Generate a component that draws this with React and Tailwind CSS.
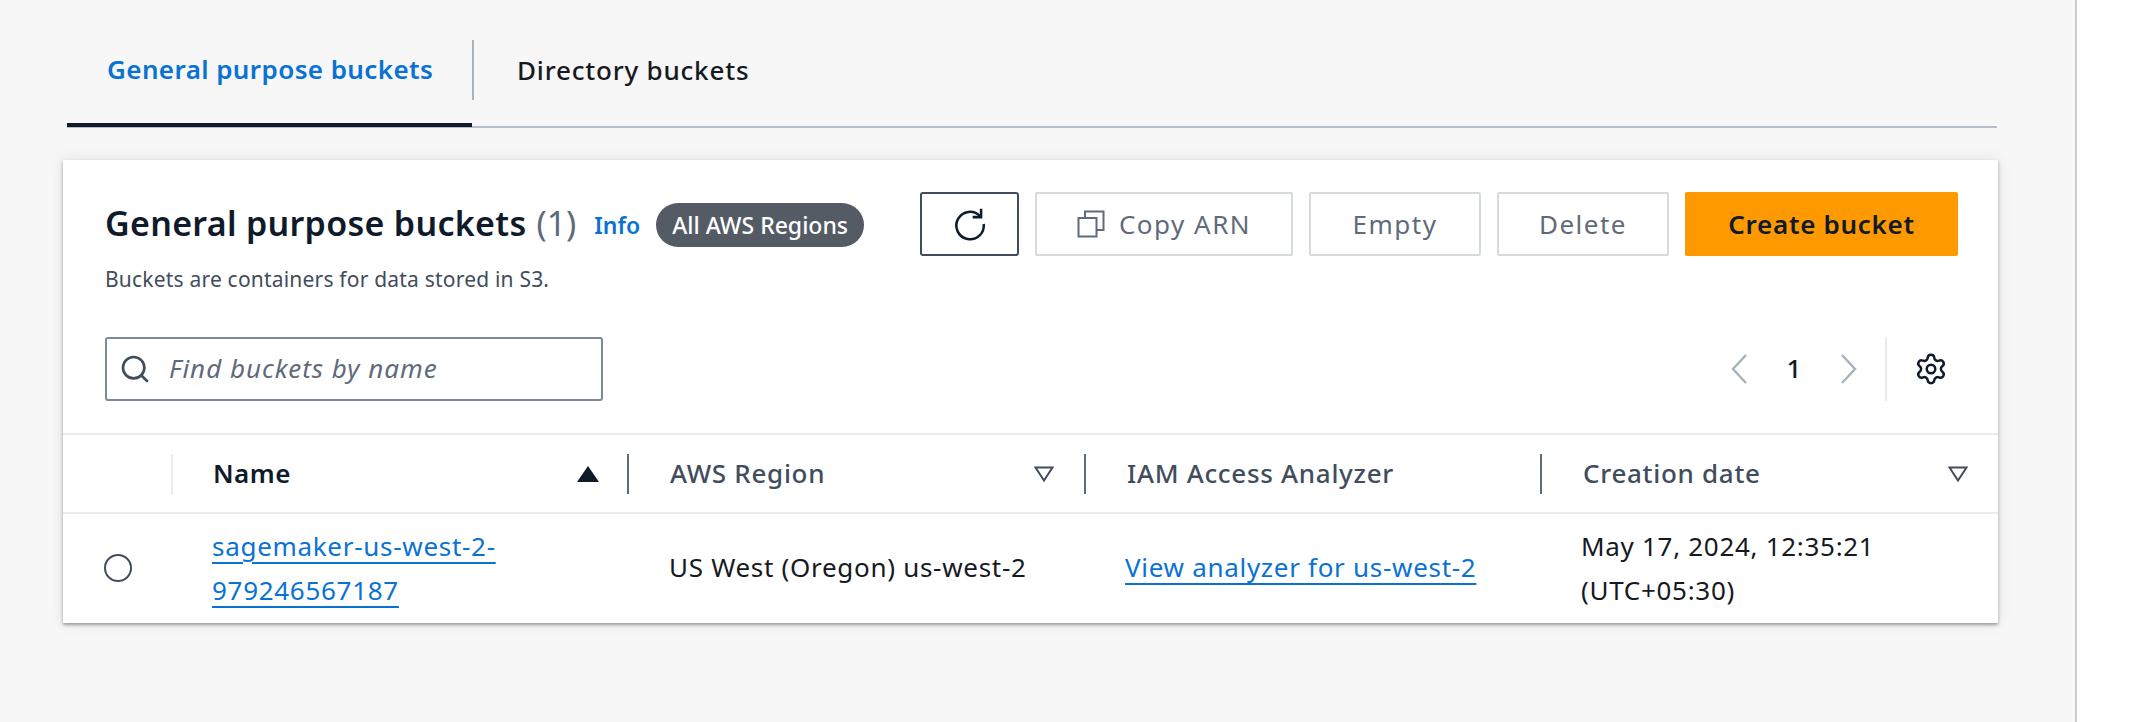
import { Search, Settings } from "lucide-react";

const RefreshIcon = () => (
  <svg width="38" height="38" viewBox="0 0 36 36" fill="none" stroke="#0f1b2a" strokeWidth="2.4">
    <path d="M27.5 10.5A13 13 0 1 0 31 18" />
    <path d="M28.5 3.5v8h-8" />
  </svg>
);

const CopyIcon = () => (
  <svg width="28" height="28" viewBox="0 0 28 28" fill="none" stroke="#5f6b7a" strokeWidth="2">
    <rect x="1.5" y="8" width="18" height="18.5" />
    <path d="M8 8V1.5h18.5V20H19.5" />
  </svg>
);

const FilterCaret = () => (
  <svg width="20" height="16" viewBox="0 0 20 16" fill="none" stroke="#414d5c" strokeWidth="2">
    <path d="M1.5 1.5h17L10 14.5z" />
  </svg>
);

const SortCaret = () => (
  <svg width="22" height="16" viewBox="0 0 22 16" fill="#0f1b2a">
    <path d="M11 0l11 16H0z" />
  </svg>
);

const Chevron = ({ d }) => (
  <svg width="20" height="32" viewBox="0 0 20 32" fill="none" stroke="#a6b3bd" strokeWidth="2.4">
    <path d={d} />
  </svg>
);

const DisabledButton = ({ className, children }) => (
  <button className={`h-[64px] flex items-center justify-center gap-[14px] bg-white border-2 border-[#d5dbdb] rounded-[2px] text-[#5f6b7a] text-[26px] font-normal tracking-[1.5px] ${className}`}>
    {children}
  </button>
);

const HeaderCell = ({ label, caret }) => (
  <div className="h-[40px] flex items-center justify-between border-l-2 border-[#5f6b7a] pl-[41px] pr-[30px]">
    <span className="text-[26px] font-medium tracking-[0.7px] text-[#414d5c]">{label}</span>
    {caret}
  </div>
);

export default function App() {
  return (
    <div className="w-[2146px] h-[722px] flex overflow-hidden bg-white font-['Noto_Sans',sans-serif]">
      <main className="w-[2077px] h-full bg-[#f7f7f7] border-r-2 border-[#c6ccd0]">
        {/* Tabs */}
        <div className="ml-[67px] mr-[78px] mt-[38px] h-[90px] flex border-b-2 border-[#b6bec9]">
          <div className="w-[405px] h-[89px] pt-[4px] pb-[26px] pl-[40px] border-b-[4px] border-[#0f1b2a] flex items-center">
            <span className="text-[26px] font-semibold text-[#0972d3] tracking-[0.4px]">General purpose buckets</span>
          </div>
          <div className="w-[2px] h-[60px] mt-[2px] bg-[#aab4bd]" />
          <div className="h-[64px] pl-[43px] flex items-center">
            <span className="text-[26px] font-medium text-[#16191f] tracking-[0.8px]">Directory buckets</span>
          </div>
        </div>

        {/* Buckets panel */}
        <section className="ml-[63px] mt-[32px] w-[1935px] h-[463px] bg-white shadow-[0_2px_3px_rgba(84,91,100,0.55),0_0_14px_rgba(0,28,36,0.1)]">
          <div className="h-[275px] border-b-2 border-[#e9ebed] pl-[42px] pr-[40px] pt-[32px]">
            <div className="flex justify-between">
              <div>
                <div className="h-[62px] flex items-center">
                  <h2 className="text-[34px] font-semibold text-[#0f1b2a] tracking-[0.3px]">General purpose buckets</h2>
                  <span className="ml-[10px] text-[34px] text-[#5f6b7a]">(1)</span>
                  <a className="ml-[18px] mt-[4px] text-[23px] font-semibold text-[#0972d3]">Info</a>
                  <span className="ml-[16px] mt-[4px] h-[44px] px-[16px] flex items-center rounded-full bg-[#545b64] text-white text-[23px] font-medium">All AWS Regions</span>
                </div>
                <p className="mt-[10px] text-[21px] text-[#414d5c] tracking-[0.2px]">Buckets are containers for data stored in S3.</p>
              </div>
              <div className="flex gap-[16px]">
                <button className="w-[99px] h-[64px] flex items-center justify-center bg-white border-2 border-[#414d5c] rounded-[3px]">
                  <RefreshIcon />
                </button>
                <DisabledButton className="w-[258px]"><CopyIcon />Copy ARN</DisabledButton>
                <DisabledButton className="w-[172px]">Empty</DisabledButton>
                <DisabledButton className="w-[172px]">Delete</DisabledButton>
                <button className="w-[273px] h-[64px] bg-[#ff9900] rounded-[2px] text-[#0f1b2a] text-[26px] font-semibold tracking-[0.7px]">Create bucket</button>
              </div>
            </div>
            <div className="mt-[41px] flex justify-between items-center pr-[10px]">
              <div className="w-[498px] h-[64px] flex items-center gap-[18px] pl-[12px] border-2 border-[#7d8998] rounded-[3px]">
                <Search size={32} color="#414d5c" strokeWidth={2} />
                <span className="text-[26px] italic text-[#5f6b7a] tracking-[1px]">Find buckets by name</span>
              </div>
              <div className="flex items-center">
                <Chevron d="M17 2L4 16l13 14" />
                <span className="w-[90px] text-center text-[26px] font-medium text-[#0f1b2a]">1</span>
                <Chevron d="M3 2l13 14L3 30" />
                <div className="ml-[26px] h-[64px] border-l-2 border-[#e9ebed] pl-[27px] flex items-center">
                  <Settings size={34} color="#0f1b2a" strokeWidth={1.75} />
                </div>
              </div>
            </div>
          </div>

          {/* Table */}
          <div className="grid grid-cols-[108px_456px_457px_456px_458px]">
            <div className="h-[79px] border-b-2 border-[#e9ebed]" />
            <div className="h-[79px] border-b-2 border-[#e9ebed] flex items-center">
              <div className="w-full h-[40px] flex items-center justify-between border-l-2 border-[#e9ebed] pl-[40px] pr-[28px]">
                <span className="text-[26px] font-semibold text-[#0f1b2a] tracking-[0.5px]">Name</span>
                <SortCaret />
              </div>
            </div>
            <div className="h-[79px] border-b-2 border-[#e9ebed] flex items-center">
              <div className="w-full"><HeaderCell label="AWS Region" caret={<FilterCaret />} /></div>
            </div>
            <div className="h-[79px] border-b-2 border-[#e9ebed] flex items-center">
              <div className="w-full"><HeaderCell label="IAM Access Analyzer" /></div>
            </div>
            <div className="h-[79px] border-b-2 border-[#e9ebed] flex items-center">
              <div className="w-full"><HeaderCell label="Creation date" caret={<FilterCaret />} /></div>
            </div>

            <div className="h-[107px] pl-[41px] flex items-center">
              <span className="w-[28px] h-[28px] rounded-full border-2 border-[#414d5c]" />
            </div>
            <div className="h-[107px] pl-[41px] flex items-center">
              <a className="text-[26px] leading-[44px] text-[#0972d3] underline underline-offset-[6px] decoration-2 w-[300px] tracking-[0.7px]">sagemaker-us-west-2-979246567187</a>
            </div>
            <div className="h-[107px] pl-[42px] flex items-center text-[26px] text-[#16191f] tracking-[0.7px]">US West (Oregon) us-west-2</div>
            <div className="h-[107px] pl-[41px] flex items-center">
              <a className="text-[26px] text-[#0972d3] underline underline-offset-[6px] decoration-2 tracking-[0.7px]">View analyzer for us-west-2</a>
            </div>
            <div className="h-[107px] pl-[41px] flex items-center text-[26px] leading-[44px] text-[#16191f] tracking-[0.7px]">
              <span>May 17, 2024, 12:35:21<br />(UTC+05:30)</span>
            </div>
          </div>
        </section>
      </main>
    </div>
  );
}
